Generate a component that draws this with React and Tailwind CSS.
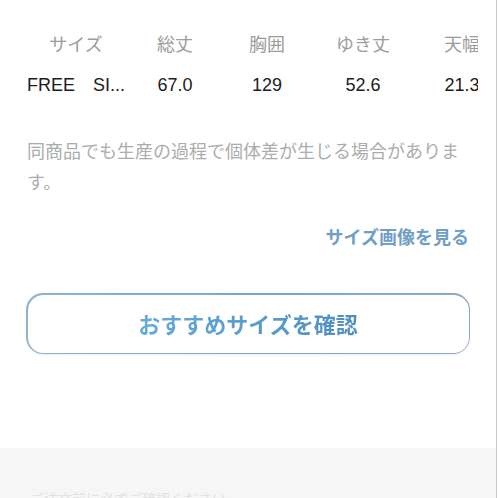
export default function App() {
  const heads = ['サイズ', '総丈', '胸囲', 'ゆき丈', '天幅'];
  const vals = ['67.0', '129', '52.6', '21.3'];
  const widths = ['w-[100px]', 'w-[84px]', 'w-[108px]', 'w-[90px]'];

  return (
    <div className="w-[498px] h-[498px] overflow-hidden bg-white font-['Noto_Sans_CJK_JP','Liberation_Sans',sans-serif]">
      <div className="w-[497px] h-full border-r border-[#c8c8c8] flex flex-col">
        <div className="shrink-0 pl-[27px] pt-[24px]">
          <div className="w-[451px] overflow-hidden">
            <div className="flex w-max text-[18px] leading-[38px] text-[#9c9c9c]">
              <div className="w-[98px] shrink-0 text-center">{heads[0]}</div>
              {heads.slice(1).map((h, i) => (
                <div key={h} className={`${widths[i]} shrink-0 text-center`}>{h}</div>
              ))}
            </div>
            <div className="mt-[4px] flex w-max text-[18px] leading-[38px] text-[#1c1c1c] font-['Liberation_Sans','Noto_Sans_CJK_JP',sans-serif]">
              <div className="w-[98px] shrink-0 flex gap-[18px] overflow-hidden whitespace-nowrap">
                <span>FREE</span>
                <span>SI...</span>
              </div>
              {vals.map((v, i) => (
                <div key={v} className={`${widths[i]} shrink-0 text-center`}>{v}</div>
              ))}
            </div>
          </div>
        </div>

        <p className="shrink-0 mt-[31px] pl-[27px] pr-[26px] text-[18px] leading-[31px] text-[#acacac]">
          同商品でも生産の過程で個体差が生じる場合があります。
        </p>

        <div className="shrink-0 mt-[26px] pr-[27px] text-right text-[18px] leading-[26px] font-semibold text-[#6f9ec6]">
          サイズ画像を見る
        </div>

        <div className="shrink-0 mt-[44px] mx-[26px] h-[61px] rounded-[17px] p-[1.5px] bg-gradient-to-r from-[#8fb3cf] via-[#7ea7c8] to-[#8aa9c6] shadow-[0_1px_2px_rgba(0,0,0,0.08)]">
          <div className="w-full h-full rounded-[15.5px] bg-white flex items-center justify-center">
            <span className="text-[22px] font-bold bg-gradient-to-r from-[#63acd8] to-[#4f8fc0] bg-clip-text text-transparent">
              おすすめサイズを確認
            </span>
          </div>
        </div>

        <div className="shrink-0 mt-[94px] h-[80px] bg-[#f6f6f6] pl-[30px] pt-[40px]">
          <div className="text-[14px] leading-[20px] text-[#e2e2e2]">ご注文前に必ずご確認ください</div>
        </div>
      </div>
    </div>
  );
}
